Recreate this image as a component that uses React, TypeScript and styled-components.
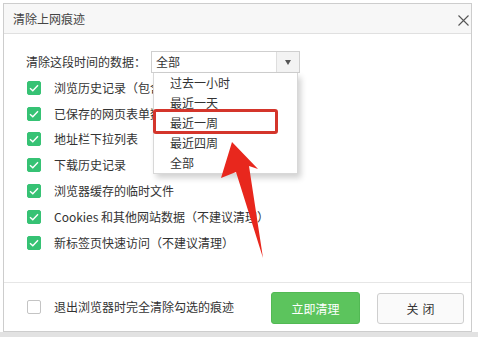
import React from "react";
import styled, { createGlobalStyle } from "styled-components";

const GlobalStyle = createGlobalStyle`
  html, body { margin: 0; padding: 0; background: #fff; }
  body {
    font-family: "Noto Sans CJK SC", "Noto Sans", sans-serif;
    font-size: 12px;
    color: #333;
  }
`;

const Page = styled.div`
  position: relative;
  width: 478px;
  height: 337px;
  box-sizing: border-box;
  padding: 3px 6px 5px 3px;
  background: linear-gradient(to bottom, #fff 332px, #e2e2e2 332px);
  overflow: hidden;
`;

const Dialog = styled.div`
  width: 469px;
  height: 329px;
  box-sizing: border-box;
  border: 1px solid #cdcdcd;
  background: #fff;
  display: flex;
  flex-direction: column;
`;

const TitleBar = styled.div`
  height: 30px;
  box-sizing: border-box;
  border-bottom: 1px solid #e0e0e0;
  background: #f7f7f7;
  display: flex;
  align-items: center;
  justify-content: space-between;
  padding: 0 2px 0 9px;
`;

const Title = styled.span`
  font-size: 12px;
  line-height: 16px;
  color: #444;
  margin-top: 1px;
`;

const CloseX = styled.svg`
  width: 11px;
  height: 11px;
  margin-top: 3px;
`;

const Body = styled.div`
  flex: 1;
  position: relative;
  padding: 17px 0 0 22px;
`;

const SelectRow = styled.div`
  display: flex;
  align-items: center;
  height: 22px;
`;

const Label = styled.span`
  width: 125px;
  line-height: 16px;
  color: #333;
`;

const Select = styled.div`
  position: relative;
  width: 149px;
  height: 22px;
  box-sizing: border-box;
  border: 1px solid #cfcfcf;
  display: flex;
  align-items: center;
  background: #fff;
`;

const SelectValue = styled.span`
  flex: 1;
  padding-left: 4px;
  line-height: 16px;
`;

const ArrowBox = styled.div`
  width: 22px;
  height: 100%;
  border-left: 1px solid #dedede;
  background: #f3f3f3;
  display: flex;
  align-items: center;
  justify-content: center;
`;

const Caret = styled.div`
  width: 0;
  height: 0;
  border-left: 3.5px solid transparent;
  border-right: 3.5px solid transparent;
  border-top: 5px solid #555;
  margin-top: 1px;
`;

const Dropdown = styled.div`
  position: absolute;
  top: 21px;
  left: 1px;
  width: 145px;
  box-sizing: border-box;
  border: 1px solid #d8d8d8;
  border-top: none;
  background: #fff;
  box-shadow: 3px 4px 6px rgba(0, 0, 0, 0.18);
  z-index: 2;
`;

const Option = styled.div`
  height: 20px;
  line-height: 20px;
  padding-left: 16px;
  color: #333;
`;

const Highlight = styled.div`
  position: absolute;
  left: -1px;
  top: 36px;
  width: 125px;
  height: 25px;
  box-sizing: border-box;
  border: 3px solid #d4352b;
  border-radius: 3px;
`;

const List = styled.div`
  margin-top: 2px;
  display: flex;
  flex-direction: column;
`;

const Row = styled.div`
  display: flex;
  align-items: center;
  height: 25.8px;
  gap: 13px;
  padding-left: 1px;
`;

const Box = styled.div<{ $checked?: boolean }>`
  width: 14px;
  height: 14px;
  box-sizing: border-box;
  border-radius: 2px;
  flex-shrink: 0;
  background: ${(p) => (p.$checked ? "#36c274" : "#fff")};
  border: 1px solid ${(p) => (p.$checked ? "#36c274" : "#c4c4c4")};
  display: flex;
  align-items: center;
  justify-content: center;
`;

const RowText = styled.span`
  line-height: 16px;
  color: #333;
  white-space: nowrap;
`;

const Footer = styled.div`
  height: 49px;
  box-sizing: border-box;
  border-top: 1px solid #e6e6e6;
  display: flex;
  align-items: center;
  padding: 0 7px 0 23px;
  gap: 13px;
`;

const Spacer = styled.div`
  flex: 1;
`;

const Buttons = styled.div`
  display: flex;
  gap: 17px;
  align-items: center;
  margin-top: 2px;
`;

const Button = styled.div<{ $primary?: boolean }>`
  width: ${(p) => (p.$primary ? "89px" : "87px")};
  height: ${(p) => (p.$primary ? "32px" : "31px")};
  box-sizing: border-box;
  border-radius: 3px;
  display: flex;
  align-items: center;
  justify-content: center;
  font-size: 12px;
  letter-spacing: ${(p) => (p.$primary ? "0" : "4px")};
  text-indent: ${(p) => (p.$primary ? "0" : "4px")};
  color: ${(p) => (p.$primary ? "#fff" : "#333")};
  background: ${(p) => (p.$primary ? "#5cc45d" : "#fafafa")};
  border: 1px solid ${(p) => (p.$primary ? "#52b954" : "#cfcfcf")};
`;

const ArrowOverlay = styled.svg`
  position: absolute;
  left: 0;
  top: 0;
  width: 478px;
  height: 337px;
  pointer-events: none;
  z-index: 5;
`;

const Check = () => (
  <svg width="10" height="8" viewBox="0 0 10 8">
    <path d="M1 4.2 L3.8 6.8 L9 1.2" fill="none" stroke="#fff" strokeWidth="1.4" />
  </svg>
);

const items = [
  "浏览历史记录（包含地址栏记录）",
  "已保存的网页表单数据",
  "地址栏下拉列表",
  "下载历史记录",
  "浏览器缓存的临时文件",
  "Cookies 和其他网站数据（不建议清理）",
  "新标签页快速访问（不建议清理）",
];

const options = ["过去一小时", "最近一天", "最近一周", "最近四周", "全部"];

export default function App() {
  return (
    <>
      <GlobalStyle />
      <Page>
        <Dialog>
          <TitleBar>
            <Title>清除上网痕迹</Title>
            <CloseX viewBox="0 0 11 11">
              <path d="M0.5 0.5 L10.5 10.5 M10.5 0.5 L0.5 10.5" stroke="#555" strokeWidth="1.1" />
            </CloseX>
          </TitleBar>
          <Body>
            <SelectRow>
              <Label>清除这段时间的数据：</Label>
              <Select>
                <SelectValue>全部</SelectValue>
                <ArrowBox>
                  <Caret />
                </ArrowBox>
                <Dropdown>
                  {options.map((o) => (
                    <Option key={o}>{o}</Option>
                  ))}
                  <Highlight />
                </Dropdown>
              </Select>
            </SelectRow>
            <List>
              {items.map((t) => (
                <Row key={t}>
                  <Box $checked>
                    <Check />
                  </Box>
                  <RowText>{t}</RowText>
                </Row>
              ))}
            </List>
          </Body>
          <Footer>
            <Box />
            <RowText>退出浏览器时完全清除勾选的痕迹</RowText>
            <Spacer />
            <Buttons>
              <Button $primary>立即清理</Button>
              <Button>关闭</Button>
            </Buttons>
          </Footer>
        </Dialog>
        <ArrowOverlay viewBox="0 0 478 337">
          <path
            d="M232 142 L258 169 L249 166 L263 258 L236 172 L221 178 Z"
            fill="#e8271d"
          />
        </ArrowOverlay>
      </Page>
    </>
  );
}
